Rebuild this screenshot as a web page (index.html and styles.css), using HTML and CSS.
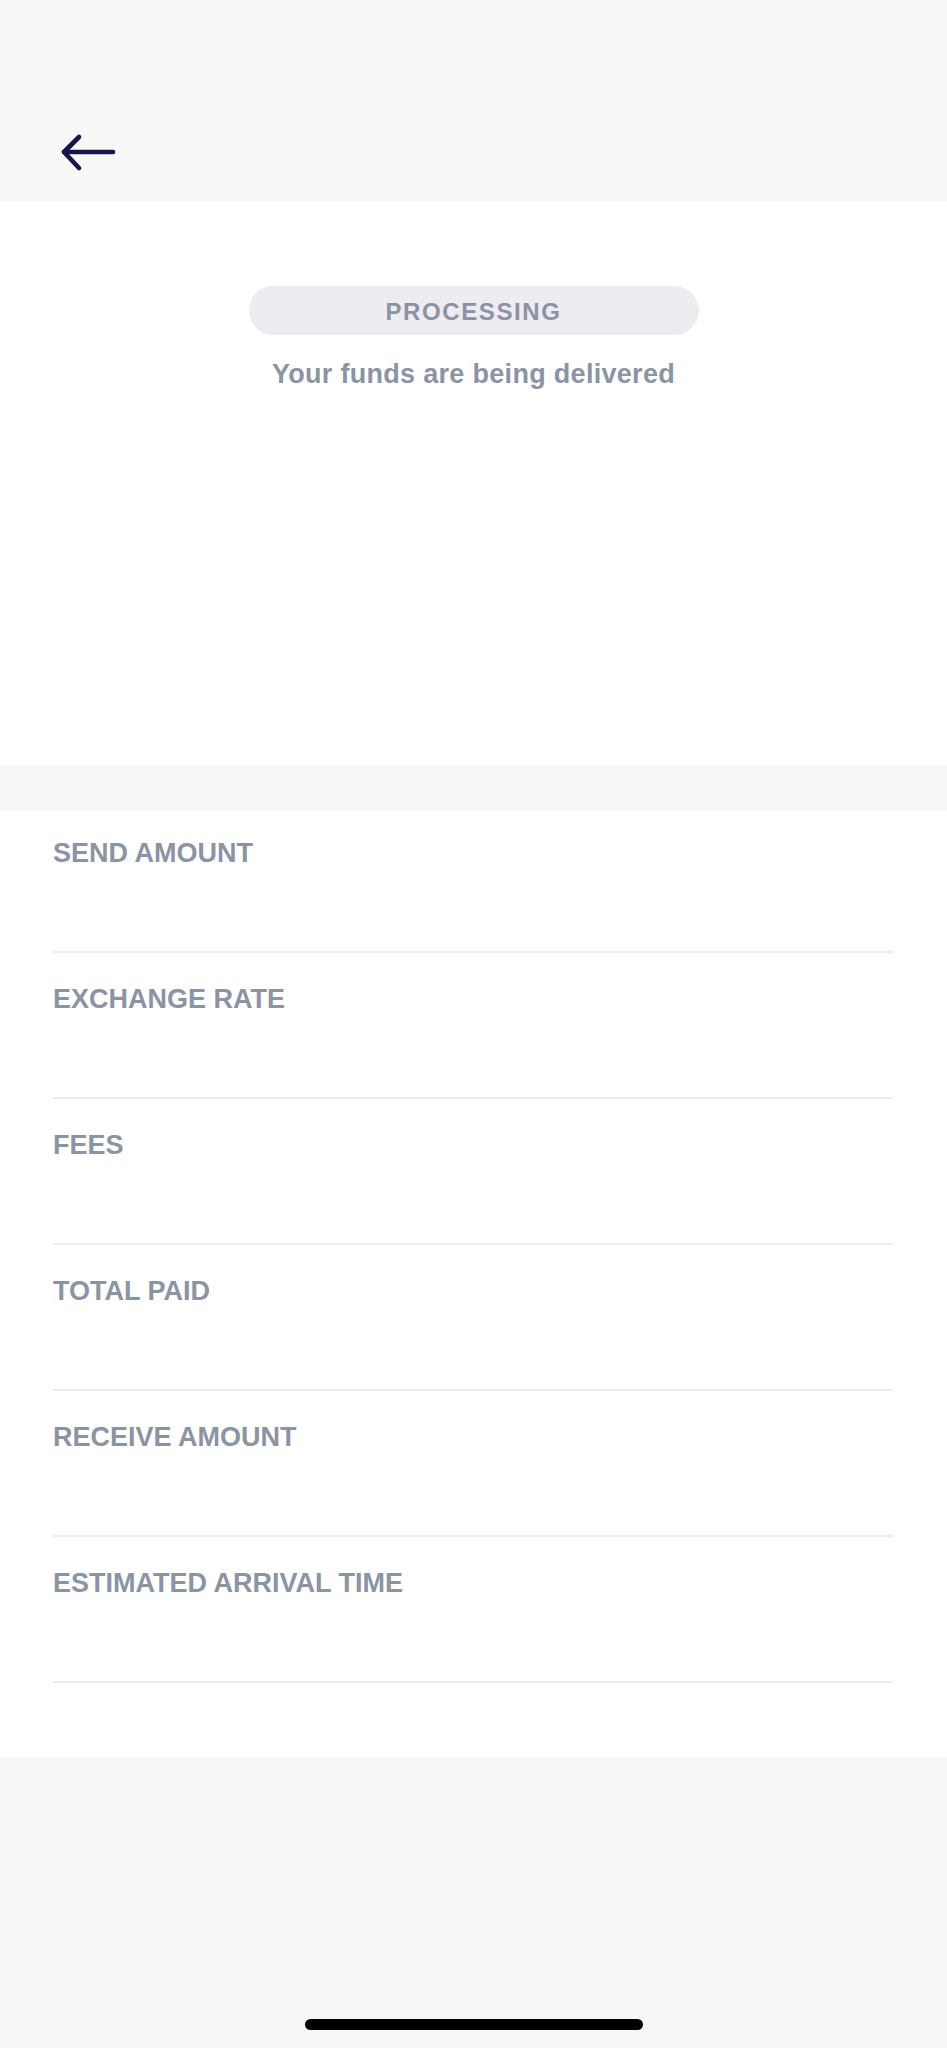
FILE: index.html
```html
<!DOCTYPE html>
<html lang="en">
<head>
<meta charset="utf-8">
<title>Transfer status</title>
<link rel="stylesheet" href="styles.css">
</head>
<body>
<div class="page">
  <header class="topbar">
    <button class="back" aria-label="Back">
      <svg width="60" height="40" viewBox="0 0 60 40" fill="none" stroke="#15154f" stroke-width="4.6" stroke-linecap="round" stroke-linejoin="round">
        <path d="M6 20 H55"/>
        <path d="M21 5 L6 20 L21 36"/>
      </svg>
    </button>
  </header>

  <section class="status">
    <div class="pill">PROCESSING</div>
    <p class="subtitle">Your funds are being delivered</p>
  </section>

  <section class="details">
    <div class="row"><span class="label">SEND AMOUNT</span></div>
    <div class="row"><span class="label">EXCHANGE RATE</span></div>
    <div class="row"><span class="label">FEES</span></div>
    <div class="row"><span class="label">TOTAL PAID</span></div>
    <div class="row"><span class="label">RECEIVE AMOUNT</span></div>
    <div class="row"><span class="label">ESTIMATED ARRIVAL TIME</span></div>
  </section>

  <footer class="home">
    <div class="home-bar"></div>
  </footer>
</div>
</body>
</html>
```

FILE: styles.css
```css
* { box-sizing: border-box; }

html, body {
  margin: 0;
  padding: 0;
  background: #f8f8f8;
}

body {
  font-family: "Liberation Sans", Arial, sans-serif;
  width: 947px;
  min-height: 2048px;
}

.page {
  display: flex;
  flex-direction: column;
  min-height: 2048px;
}

.topbar {
  height: 201px;
  background: #f8f8f8;
  padding: 132px 0 0 58px;
}

.back {
  display: block;
  border: 0;
  background: none;
  padding: 0;
  margin: 0;
  width: 60px;
  height: 40px;
}

.back svg { display: block; }

.status {
  background: #ffffff;
  height: 564px;
  padding-top: 85px;
  display: flex;
  flex-direction: column;
  align-items: center;
}

.pill {
  width: 450px;
  height: 49px;
  border-radius: 25px;
  background: #eeecf1;
  color: #8a93a3;
  font-size: 24px;
  font-weight: 700;
  letter-spacing: 1.6px;
  line-height: 49px;
  padding-top: 1px;
  text-align: center;
}

.subtitle {
  margin: 23px 0 0;
  font-size: 27px;
  font-weight: 700;
  letter-spacing: 0.3px;
  line-height: 32px;
  color: #8a94a2;
}

.details {
  margin-top: 46px;
  background: #ffffff;
  padding: 0 54px 74px 53px;
  display: flex;
  flex-direction: column;
}

.row {
  padding: 31px 0 83px;
  border-bottom: 2px solid #eaecef;
}

.row:first-child { padding-top: 27px; }

.label {
  display: block;
  font-size: 27px;
  font-weight: 700;
  letter-spacing: 0;
  line-height: 30px;
  color: #8a94a2;
}

.home {
  margin-top: auto;
  padding-bottom: 18px;
  display: flex;
  justify-content: center;
}

.home-bar {
  width: 338px;
  height: 11px;
  border-radius: 6px;
  background: #000000;
}
```
